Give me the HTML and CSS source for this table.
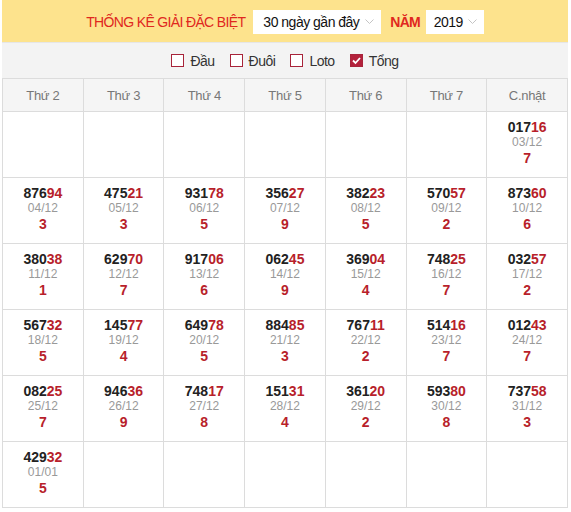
FILE: index.html
```html
<!DOCTYPE html>
<html lang="vi">
<head>
<meta charset="utf-8">
<link rel="stylesheet" href="styles.css">
</head>
<body>
<div class="wrap">
  <div class="topbar">
    <span class="title">THỐNG KÊ GIẢI ĐẶC BIỆT</span>
    <span class="select sel-range"><span class="val">30 ngày gần đây</span><svg class="chev" width="9" height="6" viewBox="0 0 9 6"><path d="M0.5 0.5l4 4 4-4" fill="none" stroke="#c4c4c4" stroke-width="1"/></svg></span>
    <span class="nam">NĂM</span>
    <span class="select sel-year"><span class="val">2019</span><svg class="chev" width="9" height="6" viewBox="0 0 9 6"><path d="M0.5 0.5l4 4 4-4" fill="none" stroke="#c4c4c4" stroke-width="1"/></svg></span>
  </div>
  <div class="filters">
    <label class="chk"><span class="box"></span>Đầu</label>
    <label class="chk"><span class="box"></span>Đuôi</label>
    <label class="chk"><span class="box"></span>Loto</label>
    <label class="chk"><span class="box on"><svg width="11" height="11" viewBox="0 0 11 11"><path d="M2 5.5l2.5 2.5L9 3" fill="none" stroke="#fff" stroke-width="1.8"/></svg></span>Tổng</label>
  </div>
  <table class="cal">
    <thead>
      <tr><th>Thứ 2</th><th>Thứ 3</th><th>Thứ 4</th><th>Thứ 5</th><th>Thứ 6</th><th>Thứ 7</th><th>C.nhật</th></tr>
    </thead>
    <tbody>
      <tr>
        <td></td><td></td><td></td><td></td><td></td><td></td>
        <td><div class="n">017<b>16</b></div><div class="d">03/12</div><div class="s">7</div></td>
      </tr>
      <tr>
        <td><div class="n">876<b>94</b></div><div class="d">04/12</div><div class="s">3</div></td>
        <td><div class="n">475<b>21</b></div><div class="d">05/12</div><div class="s">3</div></td>
        <td><div class="n">931<b>78</b></div><div class="d">06/12</div><div class="s">5</div></td>
        <td><div class="n">356<b>27</b></div><div class="d">07/12</div><div class="s">9</div></td>
        <td><div class="n">382<b>23</b></div><div class="d">08/12</div><div class="s">5</div></td>
        <td><div class="n">570<b>57</b></div><div class="d">09/12</div><div class="s">2</div></td>
        <td><div class="n">873<b>60</b></div><div class="d">10/12</div><div class="s">6</div></td>
      </tr>
      <tr>
        <td><div class="n">380<b>38</b></div><div class="d">11/12</div><div class="s">1</div></td>
        <td><div class="n">629<b>70</b></div><div class="d">12/12</div><div class="s">7</div></td>
        <td><div class="n">917<b>06</b></div><div class="d">13/12</div><div class="s">6</div></td>
        <td><div class="n">062<b>45</b></div><div class="d">14/12</div><div class="s">9</div></td>
        <td><div class="n">369<b>04</b></div><div class="d">15/12</div><div class="s">4</div></td>
        <td><div class="n">748<b>25</b></div><div class="d">16/12</div><div class="s">7</div></td>
        <td><div class="n">032<b>57</b></div><div class="d">17/12</div><div class="s">2</div></td>
      </tr>
      <tr>
        <td><div class="n">567<b>32</b></div><div class="d">18/12</div><div class="s">5</div></td>
        <td><div class="n">145<b>77</b></div><div class="d">19/12</div><div class="s">4</div></td>
        <td><div class="n">649<b>78</b></div><div class="d">20/12</div><div class="s">5</div></td>
        <td><div class="n">884<b>85</b></div><div class="d">21/12</div><div class="s">3</div></td>
        <td><div class="n">767<b>11</b></div><div class="d">22/12</div><div class="s">2</div></td>
        <td><div class="n">514<b>16</b></div><div class="d">23/12</div><div class="s">7</div></td>
        <td><div class="n">012<b>43</b></div><div class="d">24/12</div><div class="s">7</div></td>
      </tr>
      <tr>
        <td><div class="n">082<b>25</b></div><div class="d">25/12</div><div class="s">7</div></td>
        <td><div class="n">946<b>36</b></div><div class="d">26/12</div><div class="s">9</div></td>
        <td><div class="n">748<b>17</b></div><div class="d">27/12</div><div class="s">8</div></td>
        <td><div class="n">151<b>31</b></div><div class="d">28/12</div><div class="s">4</div></td>
        <td><div class="n">361<b>20</b></div><div class="d">29/12</div><div class="s">2</div></td>
        <td><div class="n">593<b>80</b></div><div class="d">30/12</div><div class="s">8</div></td>
        <td><div class="n">737<b>58</b></div><div class="d">31/12</div><div class="s">3</div></td>
      </tr>
      <tr>
        <td><div class="n">429<b>32</b></div><div class="d">01/01</div><div class="s">5</div></td>
        <td></td><td></td><td></td><td></td><td></td><td></td>
      </tr>
    </tbody>
  </table>
</div>
</body>
</html>
```

FILE: styles.css
```css
* { box-sizing: border-box; }
body {
  margin: 0;
  background: #fff;
  font-family: "Liberation Sans", Arial, sans-serif;
}
.wrap {
  width: 566px;
  margin: 0 0 0 2px;
}
.topbar {
  height: 42px;
  background: #fde38d;
  display: flex;
  align-items: center;
  justify-content: center;
  font-size: 14px;
  white-space: nowrap;
  padding-top: 1px;
}
.title {
  color: #e0281e;
  margin-right: 8px;
  letter-spacing: -0.65px;
}
.nam {
  color: #e0281e;
  font-weight: bold;
  margin: 0 6px 0 9px;
  letter-spacing: -0.8px;
}
.select {
  flex: 0 0 auto;
  background: #fff;
  height: 24px;
  display: inline-flex;
  align-items: center;
  justify-content: space-between;
  color: #111;
}
.sel-range { width: 128px; padding: 0 7px 0 10px; letter-spacing: -0.5px; }
.sel-year { width: 58px; padding: 0 7px 0 8px; letter-spacing: -0.6px; }
.chev { flex: 0 0 auto; margin-top: 1px; }
.filters {
  height: 36px;
  background: #f3f3f3;
  border-top: 1px solid #e6e6e6;
  display: flex;
  align-items: center;
  justify-content: center;
  font-size: 14px;
  letter-spacing: -0.5px;
  color: #333;
  gap: 15px;
}
.chk {
  display: inline-flex;
  align-items: center;
}
.box {
  width: 13px;
  height: 13px;
  border: 1px solid #a8243a;
  background: #fff;
  margin-right: 6px;
  display: inline-flex;
  align-items: center;
  justify-content: center;
}
.box.on { background: #b3213b; }
.cal {
  width: 566px;
  border-collapse: collapse;
  table-layout: fixed;
}
.cal th, .cal td {
  border: 1px solid #dcdcdc;
  text-align: center;
}
.cal th {
  height: 33px;
  background: #f5f5f5;
  font-weight: normal;
  font-size: 13px;
  letter-spacing: -0.3px;
  color: #777;
}
.cal td {
  height: 66px;
  vertical-align: top;
  padding: 7px 0 0;
}
.n {
  font-size: 14px;
  font-weight: bold;
  color: #222;
  line-height: 16px;
}
.n b { color: #b81f2b; }
.d {
  font-size: 12px;
  color: #999;
  line-height: 15px;
}
.s {
  font-size: 14px;
  font-weight: bold;
  color: #b81f2b;
  line-height: 16px;
}
```
